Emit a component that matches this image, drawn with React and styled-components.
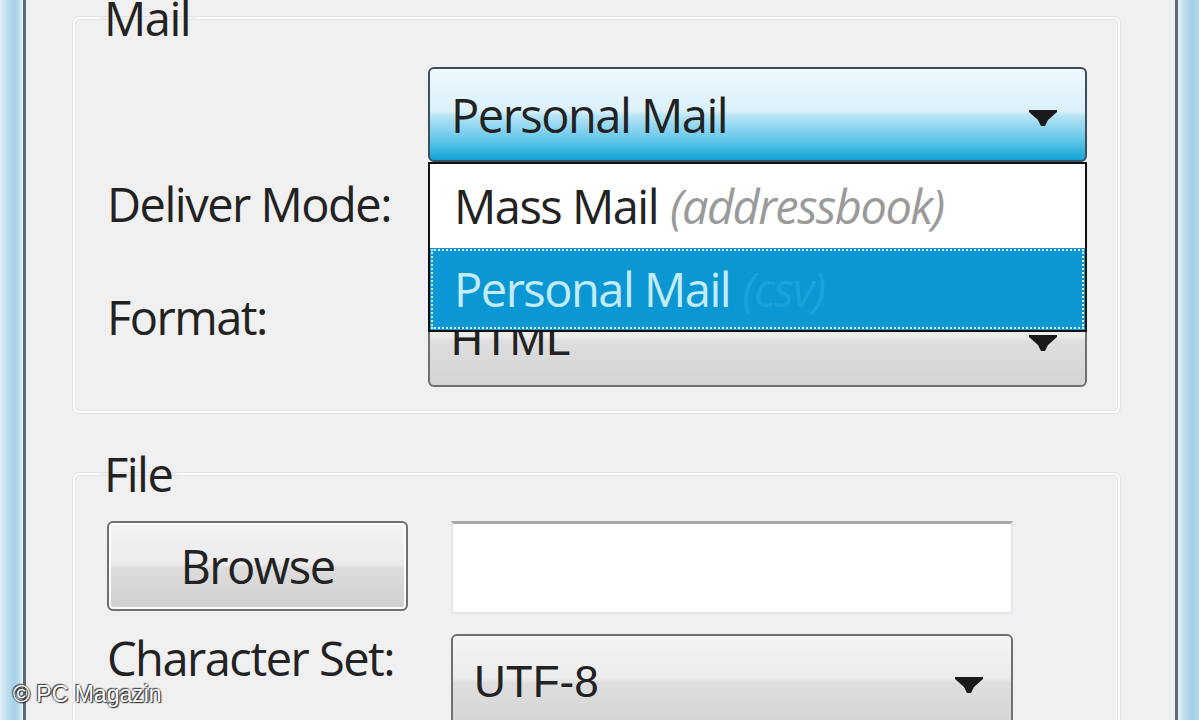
import React from 'react';
import styled, { createGlobalStyle } from 'styled-components';

const GlobalStyle = createGlobalStyle`
  html, body {
    margin: 0;
    padding: 0;
    overflow: hidden;
  }
  body {
    font-family: "Open Sans", "Noto Sans", sans-serif;
    background: #f0f0f0;
  }
`;

const Frame = styled.div`
  position: relative;
  display: flex;
  width: 1199px;
  height: 720px;
  overflow: hidden;
`;

const SideGlass = styled.div`
  flex: 0 0 ${(p) => p.$width}px;
  background: ${(p) =>
    p.$side === 'left'
      ? 'linear-gradient(90deg, #e4f1f8 0px, #c4e2f1 6px, #a5d1e8 14px, #b9dcee 19px, #e2eff6 22px)'
      : 'linear-gradient(90deg, #e6f2f8 0px, #bfe0f0 6px, #a3d0e8 14px, #b4d9ec 24px)'};
  border-${(p) => (p.$side === 'left' ? 'right' : 'left')}: 3px solid #5e6a74;
`;

const Body = styled.div`
  flex: 1;
  background: #f0f0f0;
  padding: 0 55px 0 47px;
  display: flex;
  flex-direction: column;
`;

const Group = styled.fieldset`
  margin: ${(p) => p.$top}px 0 0 0;
  padding: ${(p) => p.$padTop}px 28px 24px 32px;
  border: 2px solid #fbfbfb;
  border-radius: 6px;
  box-shadow: 0 0 0 1px #e3e3e3, inset 0 0 0 1px #e6e6e6;
  min-width: 0;
`;

const Legend = styled.legend`
  margin-left: -8px;
  padding: 0 5px;
  font-size: 47px;
  line-height: 56px;
  letter-spacing: -1.5px;
  color: #222;
`;

const Grid = styled.div`
  display: grid;
  grid-template-columns: ${(p) => p.$cols};
  grid-template-rows: ${(p) => p.$rows};
  row-gap: ${(p) => p.$gap || 0}px;
`;

const Label = styled.div`
  grid-column: 1;
  grid-row: ${(p) => p.$row};
  align-self: start;
  margin-top: ${(p) => p.$offset}px;
  font-size: 47px;
  line-height: 56px;
  letter-spacing: -1.5px;
  color: #222;
  white-space: nowrap;
`;

const Cell = styled.div`
  grid-column: ${(p) => p.$col};
  grid-row: ${(p) => p.$row};
  position: relative;
`;

const Combo = styled.div`
  display: flex;
  align-items: center;
  height: ${(p) => p.$height || 95}px;
  box-sizing: border-box;
  padding: 0 28px 0 21px;
  border: 2px solid ${(p) => (p.$hot ? '#3d4e5c' : '#707070')};
  border-radius: 6px;
  background: ${(p) =>
    p.$hot
      ? 'linear-gradient(180deg, #eef8fd 0%, #dcf1fb 46%, #b6e3f6 52%, #62c6ea 78%, #12a4d6 100%)'
      : 'linear-gradient(180deg, #f4f4f4 0%, #ececec 46%, #dedede 52%, #d4d4d4 100%)'};
  font-size: 47px;
  letter-spacing: -1.5px;
  color: #222;
`;

const ComboText = styled.span`
  flex: 1;
  white-space: nowrap;
  font-family: ${(p) => (p.$alt ? '"Liberation Sans", Arial, sans-serif' : 'inherit')};
  letter-spacing: ${(p) => (p.$alt ? '0' : '-1.5px')};
  font-size: ${(p) => (p.$alt ? '44px' : '47px')};
`;

const Arrow = styled.svg`
  flex: 0 0 28px;
  margin-top: 8px;
`;

const DropList = styled.div`
  position: absolute;
  left: 0;
  right: 0;
  top: 95px;
  height: 170px;
  box-sizing: border-box;
  border: 2px solid #111;
  background: #fff;
  display: flex;
  flex-direction: column;
  z-index: 5;
`;

const Option = styled.div`
  flex: ${(p) => (p.$selected ? '0 0 82px' : '1')};
  display: flex;
  align-items: center;
  padding-left: 24px;
  box-sizing: border-box;
  font-size: 47px;
  letter-spacing: -1.5px;
  white-space: nowrap;
  color: ${(p) => (p.$selected ? '#c4ecf8' : '#222')};
  background: ${(p) => (p.$selected ? '#0b97d3' : '#fff')};
  outline: ${(p) => (p.$selected ? '2px dotted #e8f6fb' : 'none')};
  outline-offset: -3px;
`;

const Hint = styled.span`
  margin-left: 12px;
  font-style: italic;
  color: ${(p) => (p.$selected ? '#1aa2dc' : '#9a9a9a')};
`;

const Button = styled.div`
  width: 301px;
  height: 90px;
  box-sizing: border-box;
  display: flex;
  align-items: center;
  justify-content: center;
  border: 2px solid #707070;
  border-radius: 6px;
  background: linear-gradient(180deg, #f3f3f3 0%, #ececec 48%, #dddddd 52%, #d0d0d0 100%);
  box-shadow: inset 0 0 0 2px #fbfbfb;
  font-size: 47px;
  letter-spacing: -1.5px;
  color: #222;
`;

const TextBox = styled.div`
  height: 93px;
  box-sizing: border-box;
  background: #fff;
  border: 2px solid #e2e8ee;
  border-top: 3px solid #a9a9a9;
`;

const Watermark = styled.div`
  position: absolute;
  left: 13px;
  bottom: 12px;
  font-family: "Liberation Sans", Arial, sans-serif;
  font-size: 23px;
  color: #fff;
  text-shadow: 0 0 2px #333, 1px 1px 1px #222, -1px -1px 1px #444;
`;

const DownArrow = () => (
  <Arrow width="28" height="17" viewBox="0 0 28 17">
    <path d="M0 0 H28 V2 L19 10 L16 16 H12 L9 10 L0 2 Z" fill="#1a1a1a" />
  </Arrow>
);

export default function App() {
  return (
    <>
      <GlobalStyle />
      <Frame>
        <SideGlass $side="left" $width={23} />
        <Body>
          <Group $top={-10} $padTop={21}>
            <Legend>Mail</Legend>
            <Grid $cols="321px 659px" $rows="95px 130px 95px">
              <Cell $col={2} $row={1}>
                <Combo $hot>
                  <ComboText>Personal Mail</ComboText>
                  <DownArrow />
                </Combo>
                <DropList>
                  <Option>
                    Mass Mail<Hint>(addressbook)</Hint>
                  </Option>
                  <Option $selected>
                    Personal Mail<Hint $selected>(csv)</Hint>
                  </Option>
                </DropList>
              </Cell>
              <Label $row={2} $offset={14}>Deliver Mode:</Label>
              <Label $row={3} $offset={-3}>Format:</Label>
              <Cell $col={2} $row={3}>
                <Combo>
                  <ComboText $alt>HTML</ComboText>
                  <DownArrow />
                </Combo>
              </Cell>
            </Grid>
          </Group>
          <Group $top={33} $padTop={19}>
            <Legend>File</Legend>
            <Grid $cols="344px 562px" $rows="93px 95px" $gap={20}>
              <Cell $col={1} $row={1}>
                <Button>Browse</Button>
              </Cell>
              <Cell $col={2} $row={1}>
                <TextBox />
              </Cell>
              <Label $row={2} $offset={-4}>Character Set:</Label>
              <Cell $col={2} $row={2}>
                <Combo>
                  <ComboText $alt>UTF-8</ComboText>
                  <DownArrow />
                </Combo>
              </Cell>
            </Grid>
          </Group>
        </Body>
        <SideGlass $side="right" $width={21} />
        <Watermark>© PC Magazin</Watermark>
      </Frame>
    </>
  );
}
